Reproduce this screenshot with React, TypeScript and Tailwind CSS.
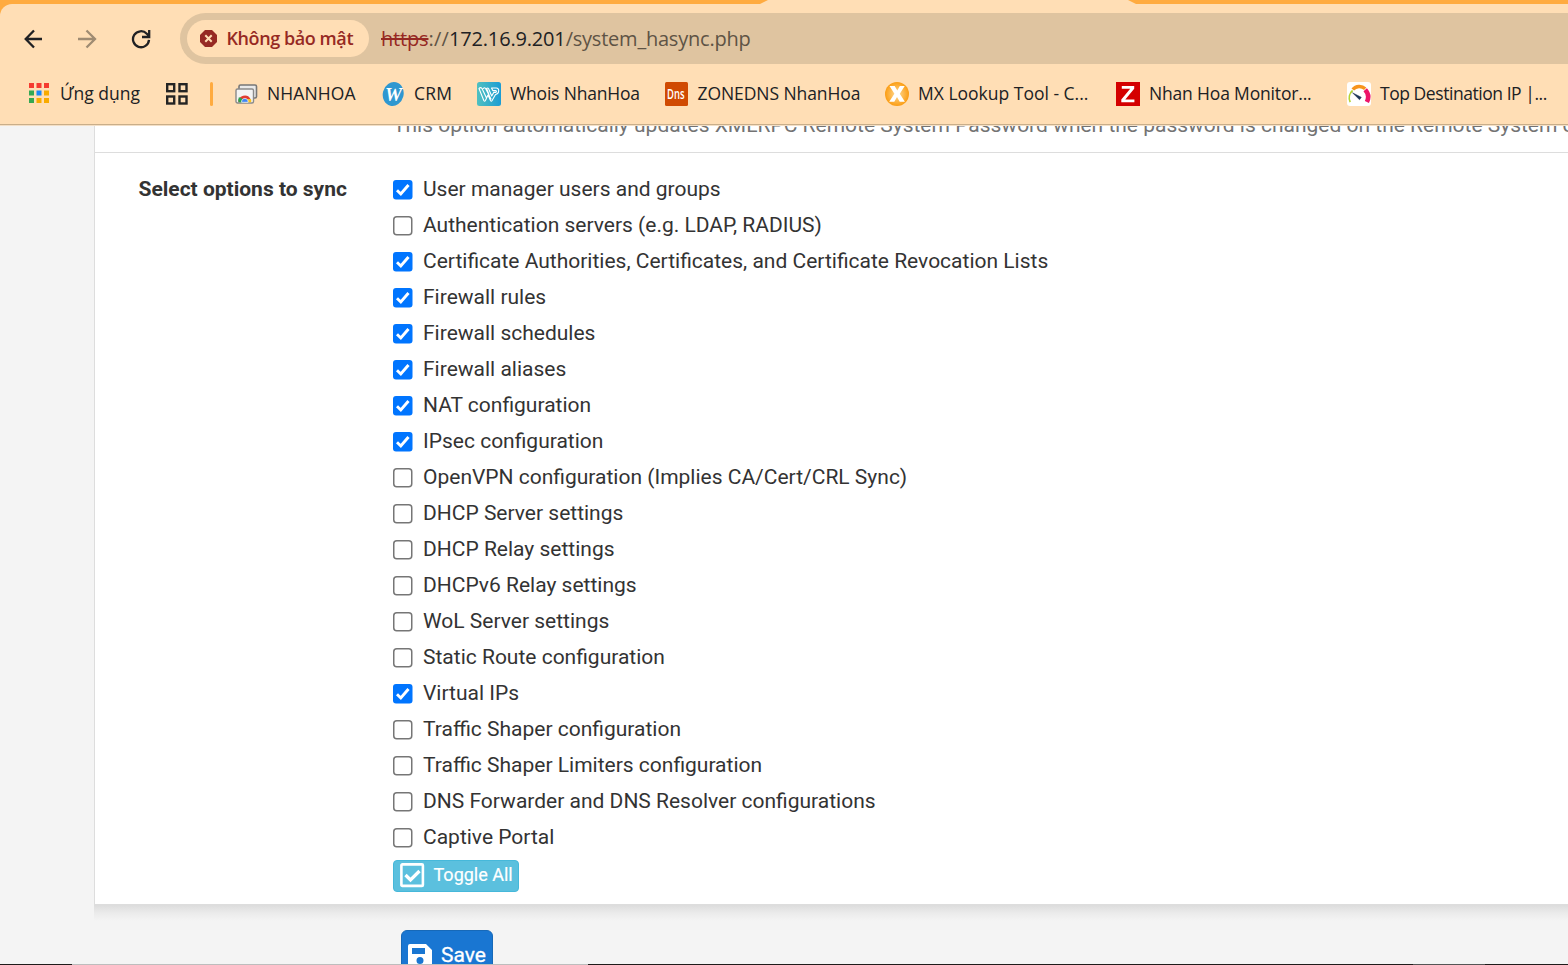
import React from "react";

type Bookmark = { label: string; slot: string; text: string; icon: React.ReactNode };

const AppsIcon = () => (
  <svg width="20" height="20" viewBox="0 0 20 20" className="-mt-[2px]">
    {["#f53b30", "#f53b30", "#f53b30", "#34a853", "#1a88f8", "#f9ab00", "#34a853", "#f9ab00", "#f9ab00"].map((c, i) => (
      <rect key={i} x={(i % 3) * 7.5} y={Math.floor(i / 3) * 7.5} width="5" height="5" fill={c} />
    ))}
  </svg>
);

const GridIcon = () => (
  <svg width="22" height="22" viewBox="0 0 22 22" fill="none" stroke="#242424" strokeWidth="2.4">
    <rect x="1.2" y="1.2" width="7" height="7" />
    <rect x="13.5" y="1.2" width="7" height="7" />
    <rect x="1.2" y="13.5" width="7" height="7" />
    <rect x="13.5" y="13.5" width="7" height="7" />
  </svg>
);

const RemoteIcon = () => (
  <svg width="24" height="24" viewBox="0 0 24 24">
    <rect x="4" y="3" width="17.5" height="13" rx="1.5" fill="#e9e9e9" stroke="#777" strokeWidth="1.6" />
    <rect x="1" y="7" width="17.5" height="14" rx="1.5" fill="#f4f4f4" stroke="#8a8a8a" strokeWidth="1.4" />
    <path d="M3.3 20.3a6.5 6.5 0 0 1 12.2-3.3H9.8Z" fill="#e23b30" />
    <path d="M3.9 15.3a6.5 6.5 0 0 0-.3 5h5.7l-2.4-4Z" fill="#2da24c" />
    <path d="M11 17h5a6.5 6.5 0 0 1 .2 3.3H10Z" fill="#fbc31b" />
    <path d="M6.6 20.3a3.3 3.3 0 1 1 6.5 0Z" fill="#4285f4" stroke="#fff" strokeWidth=".7" />
  </svg>
);

const CrmIcon = () => (
  <svg width="24" height="24" viewBox="0 0 24 24">
    <ellipse cx="11.2" cy="12" rx="10.4" ry="12" transform="rotate(14 11.2 12)" fill="#2f97d0" />
    <text x="11.5" y="19" textAnchor="middle" textLength="17" lengthAdjust="spacingAndGlyphs" fontFamily="Liberation Serif" fontStyle="italic" fontWeight="700" fontSize="19" fill="#fff">W</text>
  </svg>
);

const WhoisIcon = () => (
  <svg width="24" height="24" viewBox="0 0 24 24">
    <defs>
      <linearGradient id="whois"><stop stopColor="#50c0c0" /><stop offset="1" stopColor="#1c9cd4" /></linearGradient>
    </defs>
    <rect width="24" height="24" rx="2.5" fill="url(#whois)" />
    <g fill="none" stroke="#fff" strokeWidth="1.1" strokeLinejoin="round" strokeLinecap="round">
      <path d="M2 6.500 6.800 18.500q.8 1.200 1.600 0L11 13l2.500 5.500q.8 1.200 1.600 0L18.500 12.500q3-.6 3.200-3.500T19.200 6h-4.700l1.300 2.600h3.200q1 .8-.2 1.800h-2L14.700 14 11.500 6.500q-.8-1-1.900 0L12 12.500M2 6.500Q3.500 4.800 5 6.500L9.500 16M6.300 6.500q1.200-1.500 2.300 0L14 17" />
    </g>
  </svg>
);

const DnsIcon = () => (
  <svg width="23" height="24" viewBox="0 0 23 24">
    <rect width="23" height="24" rx="1.5" fill="#d04a02" />
    <text x="2" y="17" textLength="17.500" lengthAdjust="spacingAndGlyphs" fontFamily="Open Sans" fontSize="14" fontWeight="600" fill="#fff">Dns</text>
  </svg>
);

const MxIcon = () => (
  <svg width="24" height="24" viewBox="0 0 24 24">
    <defs>
      <radialGradient id="mx"><stop stopColor="#ffdc9a" /><stop offset="1" stopColor="#fb9d13" /></radialGradient>
    </defs>
    <circle cx="12" cy="12" r="12" fill="url(#mx)" />
    <path d="M4.5 4h5.2L12.3 8.6 14.8 4h4.9l-4.9 7.700 5.100 8.100h-5.200L12 15l-2.700 4.800H4.200l5.200-8.100Z" fill="#fff" />
  </svg>
);

const ZabbixIcon = () => (
  <svg width="24" height="24" viewBox="0 0 24 24">
    <rect width="24" height="24" fill="#d40000" />
    <path d="M5.800 4h12.400v2.700L9.300 17.400h9.100v2.800H5.300v-2.800l8.900-10.600H5.800Z" fill="#fff" />
  </svg>
);

const GaugeIcon = () => (
  <svg width="24" height="24" viewBox="0 0 24 24" fill="none">
    <rect width="24" height="24" rx="3" fill="#fff" />
    <path d="M3.200 20.200A10 10 0 0 1 5.600 8.500" stroke="#b4d334" strokeWidth="1.700" />
    <path d="M5.800 7.500A8.500 8.500 0 0 1 18.200 6.800" stroke="#f7941e" strokeWidth="3.400" />
    <path d="M18.200 7.700a11 11 0 0 1 1.700 12.300" stroke="#ed1468" strokeWidth="4.600" />
    <path d="m5.500 10.800 8.800 4.500-1.800 2.400Z" fill="#1d3557" stroke="#1d3557" strokeWidth=".5" />
  </svg>
);

const bookmarks: Bookmark[] = [
  { label: "NHANHOA", slot: "w-[147px]", text: "-ml-[0.5px] tracking-[0.1px]", icon: <RemoteIcon /> },
  { label: "CRM", slot: "w-[95px]", text: "-ml-[0.5px] tracking-[0.2px]", icon: <CrmIcon /> },
  { label: "Whois NhanHoa", slot: "w-[188px]", text: "ml-[0.5px] tracking-[-0.18px]", icon: <WhoisIcon /> },
  { label: "ZONEDNS NhanHoa", slot: "w-[220px]", text: "tracking-[-0.08px]", icon: <DnsIcon /> },
  { label: "MX Lookup Tool - C...", slot: "w-[231px]", text: "ml-[0.5px]", icon: <MxIcon /> },
  { label: "Nhan Hoa Monitor...", slot: "w-[231px]", text: "ml-[0.5px] tracking-[-0.17px]", icon: <ZabbixIcon /> },
  { label: "Top Destination IP |...", slot: "w-[215px]", text: "ml-[0.5px] tracking-[-0.45px]", icon: <GaugeIcon /> },
];

const options: [string, boolean][] = [
  ["User manager users and groups", true],
  ["Authentication servers (e.g. LDAP, RADIUS)", false],
  ["Certificate Authorities, Certificates, and Certificate Revocation Lists", true],
  ["Firewall rules", true],
  ["Firewall schedules", true],
  ["Firewall aliases", true],
  ["NAT configuration", true],
  ["IPsec configuration", true],
  ["OpenVPN configuration (Implies CA/Cert/CRL Sync)", false],
  ["DHCP Server settings", false],
  ["DHCP Relay settings", false],
  ["DHCPv6 Relay settings", false],
  ["WoL Server settings", false],
  ["Static Route configuration", false],
  ["Virtual IPs", true],
  ["Traffic Shaper configuration", false],
  ["Traffic Shaper Limiters configuration", false],
  ["DNS Forwarder and DNS Resolver configurations", false],
  ["Captive Portal", false],
];

const Checkbox = ({ on }: { on: boolean }) => (
  <svg width="20" height="20" viewBox="0 0 20 20" className="mt-[2px] shrink-0">
    {on ? (
      <>
        <rect width="19.5" height="19.5" rx="3" fill="#0075ff" />
        <path d="M4 10.3 7.8 14 15.5 5" fill="none" stroke="#fff" strokeWidth="2.9" />
      </>
    ) : (
      <rect x=".75" y=".75" width="18" height="18" rx="3" fill="#fff" stroke="#767676" strokeWidth="1.5" />
    )}
  </svg>
);

function BrowserBar() {
  return (
    <header className="h-[126px] shrink-0 bg-[#ffab40] font-['Open_Sans',sans-serif]">
      <div className="flex h-1">
        <div className="ml-[760px] h-1 w-[376px] bg-[#ffdeb5] [clip-path:polygon(8px_0,368px_0,100%_100%,0_100%)]" />
      </div>
      <div className="flex h-[122px] flex-col rounded-tl-[12px] border-b border-[#f3dfc6] bg-[#ffdeb5]">
        <div className="flex h-[121px] flex-col border-b border-[#c9ae8a]">
          <div className="flex pt-[9px]">
            <div className="flex w-[180px] shrink-0 items-center pl-[24px]">
              <svg width="130" height="20" viewBox="0 0 130 20" fill="none" strokeWidth="2.3">
                <path d="M18 10H2M10 1.5 1.7 10l8.3 8.5" stroke="#202124" />
                <path d="M54 10h16M62.5 1.5 71 10l-8.500 8.500" stroke="#9f8b72" />
                <path d="M125 10.800A8 8 0 1 1 122.800 4.700L125 7M125.200 1v7H118" stroke="#202124" />
              </svg>
            </div>
            <div className="flex h-[51px] flex-1 items-center rounded-l-full bg-[#dfc4a0] pl-[7px]">
              <div className="flex h-[37px] w-[182px] items-center rounded-full bg-[#ffdeb5] pl-[13px] text-[18px] font-semibold text-[#962923]">
                <svg width="17" height="17" viewBox="0 0 17 17" className="mr-[9.500px] shrink-0">
                  <path d="M5 0h7l5 5v7l-5 5H5l-5-5V5Z" fill="#962923" />
                  <path d="m5.300 5.300 6.400 6.400m0-6.400-6.400 6.400" stroke="#ffdeb5" strokeWidth="2" />
                </svg>
                <span className="whitespace-nowrap tracking-[-0.42px]">Không bảo mật</span>
              </div>
              <div className="ml-[12px] whitespace-nowrap text-[20px] tracking-[-0.17px] text-[#5e5345]">
                <span className="text-[#962923] line-through">https</span>
                <span className="tracking-[0.2px]">://</span>
                <span className="text-[#202124]">172.16.9.201</span>
                <span className="tracking-[-0.22px]">/system_hasync.php</span>
              </div>
            </div>
          </div>
          <div className="flex h-[60px] items-center text-[17.500px] text-[#202124]">
            <div className="flex w-[166px] shrink-0 items-center gap-[11px] pl-[29px]">
              <AppsIcon />
              <span className="-mt-[2px] whitespace-nowrap">Ứng dụng</span>
            </div>
            <div className="w-[44px] shrink-0"><GridIcon /></div>
            <div className="mr-[22px] h-[24px] w-[3px] shrink-0 rounded-full bg-[#ffab40]" />
            {bookmarks.map((b) => (
              <div key={b.label} className={`flex shrink-0 items-center ${b.slot}`}>
                <div className="w-[32.500px] shrink-0">{b.icon}</div>
                <span className={`-mt-[2px] whitespace-nowrap ${b.text}`}>{b.label}</span>
              </div>
            ))}
          </div>
        </div>
      </div>
    </header>
  );
}

export default function App() {
  return (
    <div className="flex h-[965px] w-[1568px] flex-col overflow-hidden bg-[#f4f4f4] font-[Roboto,sans-serif] text-[21px] text-[#333]">
      <BrowserBar />
      <main className="ml-[94px] flex h-[838px] shrink-0 flex-col overflow-hidden">
        <section className="h-[779px] shrink-0 border-b border-l border-[#ddd] bg-white">
          <div className="h-[27px] overflow-hidden border-b border-[#ddd] pl-[298px]">
            <p className="-mt-[16px] whitespace-nowrap leading-[30px] text-[#737373]">
              This option automatically updates XMLRPC Remote System Password when the password is changed on the Remote System or
            </p>
          </div>
          <div className="flex pt-[18px]">
            <div className="w-[298px] shrink-0 pl-[43.500px] font-bold leading-[36px]">Select options to sync</div>
            <div>
              {options.map(([label, on]) => (
                <label key={label} className="flex h-[36px] items-center gap-[10px] whitespace-nowrap">
                  <Checkbox on={on} />
                  <span className="mt-[2px]">{label}</span>
                </label>
              ))}
              <button className="mt-[5px] flex h-[32px] w-[126px] items-center rounded-[4px] border border-[#46b8da] bg-[#5bc0de] pl-[6px] text-[18px] text-white">
                <svg width="25" height="25" viewBox="0 0 25 25" fill="none" stroke="#fff" className="-mt-[1px] mr-[8.500px] shrink-0">
                  <rect x="1.400" y="1.400" width="21.500" height="21.500" rx="1" strokeWidth="2.600" />
                  <path d="m5.500 12 5 5L19.500 8" strokeWidth="3.300" />
                </svg>
                <span className="-mt-[3px] whitespace-nowrap [-webkit-text-stroke:0.2px_white]">Toggle All</span>
              </button>
            </div>
          </div>
        </section>
        <div className="h-[16px] shrink-0 bg-linear-to-b from-[#dcdcdc] via-[#ebebeb] to-[#f4f4f4]" />
        <button className="ml-[307px] mt-[9px] flex h-[50px] w-[92px] shrink-0 items-center rounded-[6px] border border-[#1769b8] bg-[#1976d2] pl-[6px] text-white">
          <svg width="24" height="24" viewBox="0 0 24 24" className="mr-[9px] mt-[1px] shrink-0">
            <path fillRule="evenodd" d="M2 0h16l6 6v16q0 2-2 2H2q-2 0-2-2V2Q0 0 2 0Zm2 4v6h13V4Zm8 9a3.500 3.500 0 1 0 0 7a3.500 3.500 0 0 0 0-7Z" fill="#fff" />
          </svg>
          <span className="mt-[2px] [-webkit-text-stroke:0.3px_white]">Save</span>
        </button>
      </main>
      <div className="flex h-px shrink-0 bg-[#1f1b1a]">
        <div className="ml-[72px] w-[516px] bg-[#bdbdbd]" />
        <div className="ml-[825px] w-[72px] bg-[#555]" />
      </div>
    </div>
  );
}
